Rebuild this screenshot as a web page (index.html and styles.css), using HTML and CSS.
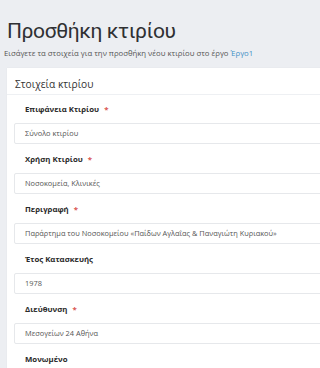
FILE: index.html
```html
<!DOCTYPE html>
<html lang="el">
<head>
<meta charset="utf-8">
<title>Προσθήκη κτιρίου</title>
<link rel="stylesheet" href="styles.css">
</head>
<body>
<main class="page">
  <h1 class="title">Προσθήκη κτιρίου</h1>
  <p class="subtitle">Εισάγετε τα στοιχεία για την προσθήκη νέου κτιρίου στο έργο <a class="link" href="#">Έργο1</a></p>
  <section class="card">
    <div class="card-header">Στοιχεία κτιρίου</div>
    <div class="card-body">
      <div class="field">
        <label class="label">Επιφάνεια Κτιρίου <span class="req">*</span></label>
        <div class="input">Σύνολο κτιρίου</div>
      </div>
      <div class="field">
        <label class="label">Χρήση Κτιρίου <span class="req">*</span></label>
        <div class="input">Νοσοκομεία, Κλινικές</div>
      </div>
      <div class="field">
        <label class="label">Περιγραφή <span class="req">*</span></label>
        <div class="input">Παράρτημα του Νοσοκομείου «Παίδων Αγλαΐας &amp; Παναγιώτη Κυριακού»</div>
      </div>
      <div class="field">
        <label class="label">Έτος Κατασκευής</label>
        <div class="input">1978</div>
      </div>
      <div class="field">
        <label class="label">Διεύθυνση <span class="req">*</span></label>
        <div class="input">Μεσογείων 24 Αθήνα</div>
      </div>
      <div class="field">
        <label class="label">Μονωμένο</label>
        <div class="input"></div>
      </div>
    </div>
  </section>
</main>
</body>
</html>
```
FILE: styles.css
```css
html, body {
  margin: 0;
  padding: 0;
  background: #eceef2;
  overflow: hidden;
}
body {
  font-family: "Open Sans", "Liberation Sans", sans-serif;
  color: #333;
}
.page {
  padding: 16px 0 0 7px;
  width: 340px;
}
.title {
  margin: 0;
  font-family: Roboto, "Open Sans", sans-serif;
  font-weight: 400;
  font-size: 21px;
  line-height: 30px;
  letter-spacing: -0.4px;
  color: #2f3033;
}
.subtitle {
  margin: 2px 0 0 -3px;
  font-size: 7.75px;
  line-height: 11px;
  color: #555;
  white-space: nowrap;
}
.link {
  color: #3d8ec6;
  text-decoration: none;
}
.card {
  margin-top: 9px;
  background: #fff;
  box-shadow: 0 0 1px rgba(0,0,0,0.08);
}
.card-header {
  height: 17px;
  padding: 9px 0 0 8px;
  line-height: 14px;
  font-size: 10.2px;
  color: #333;
  border-bottom: 1px solid #eef0f3;
}
.card-body {
  padding: 6px 0 0 7px;
  display: flex;
  flex-direction: column;
  gap: 7px;
}
.field {
  display: flex;
  flex-direction: column;
  gap: 6px;
}
.label {
  padding-left: 11px;
  font-size: 7.8px;
  line-height: 16px;
  font-weight: 700;
  color: #2a2a2a;
}
.req {
  color: #d9534f;
  margin-left: 3px;
}
.input {
  height: 19px;
  border: 1px solid #e6e8eb;
  border-radius: 2px;
  padding-left: 10px;
  font-size: 7.4px;
  line-height: 19px;
  color: #555;
  white-space: nowrap;
  overflow: hidden;
}
```
